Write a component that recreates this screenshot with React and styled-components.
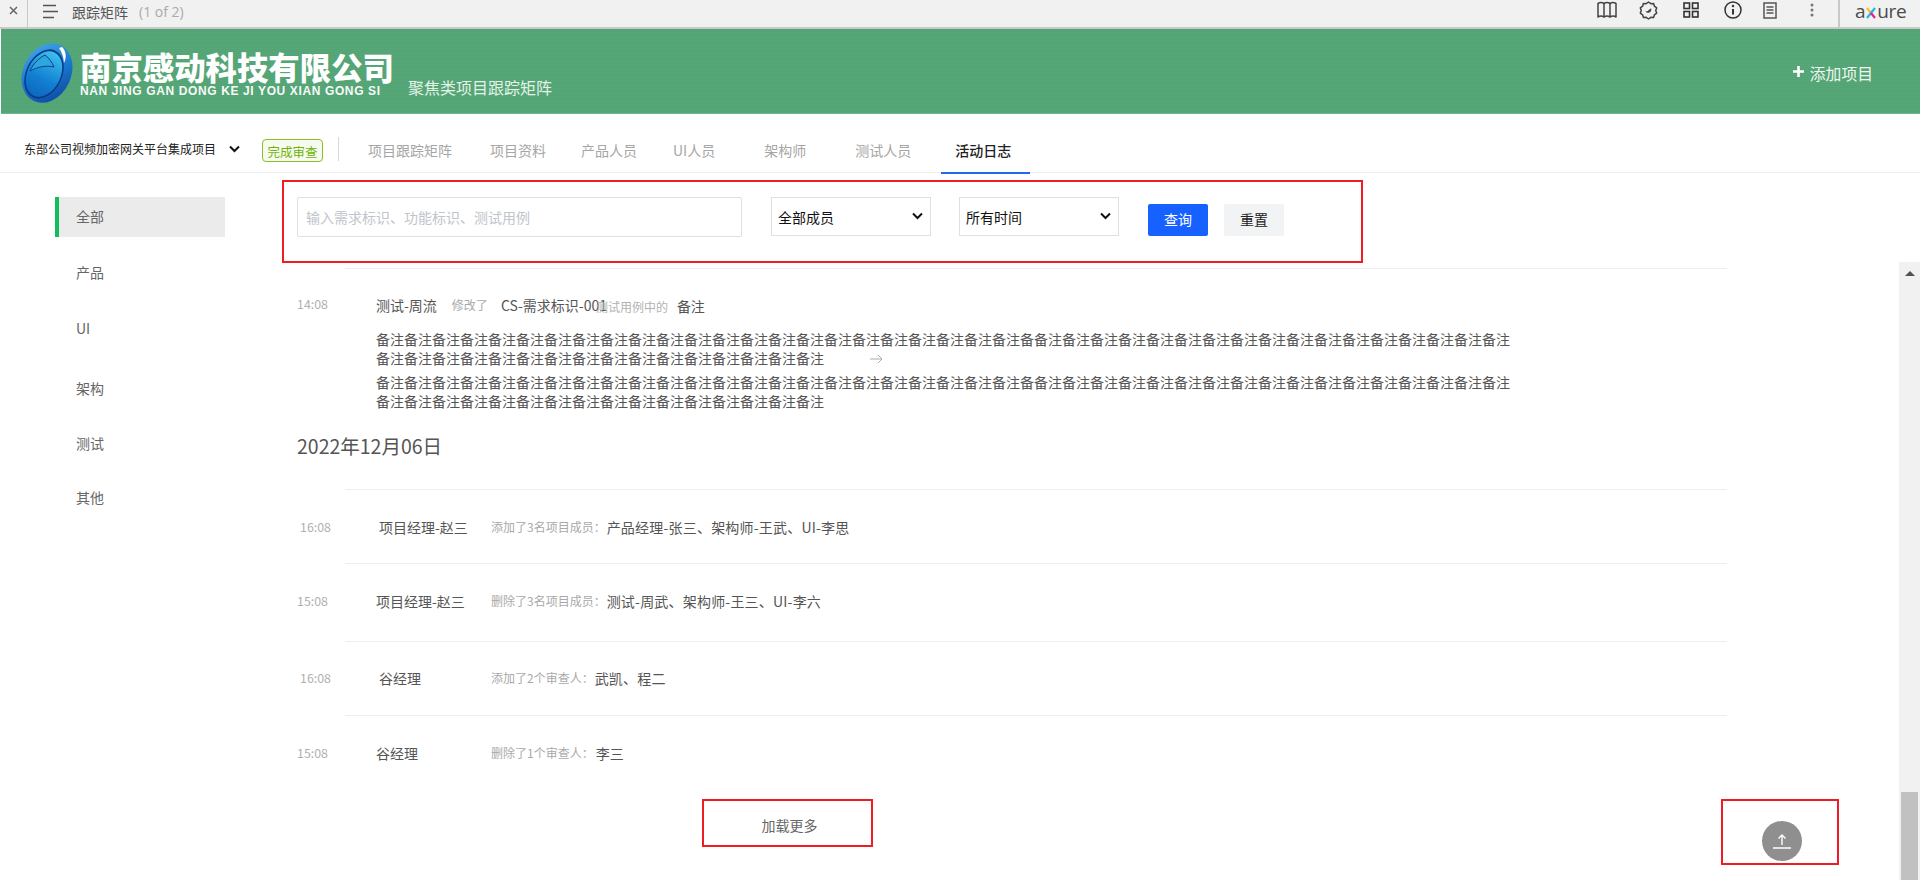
import React from "react";
import styled, { createGlobalStyle } from "styled-components";

const Global = createGlobalStyle`
  html, body { margin: 0; padding: 0; height: 880px; overflow: hidden; background: #fff; }
  body { font-family: "Noto Sans CJK SC", "Liberation Sans", sans-serif; }
  * { box-sizing: border-box; }
`;

const Page = styled.div`
  width: 1920px; height: 880px; display: flex; flex-direction: column; overflow: hidden;
`;

/* top Axure player bar */
const Toolbar = styled.header`
  height: 29px; flex: none; display: flex; align-items: center; background: #f1f1f1;
  border-bottom: 2px solid #c9c9c9; color: #555;
`;
const CloseCell = styled.div`
  width: 28px; height: 27px; display: flex; align-items: center; justify-content: center;
  border-right: 1px solid #c9c9c9; padding-bottom: 6px;
`;
const MenuIcon = styled.svg`
  width: 16px; height: 15px; margin: -5px 14px 0 14px; display: block;
`;
const PageTitle = styled.span`
  font-size: 14px; color: #555; line-height: 20px; margin-top: -4px;
`;
const PageCount = styled.span`
  font-size: 14px; color: #aaa; margin: -4px 0 0 11px; line-height: 20px; font-family: "Open Sans", sans-serif;
`;
const ToolIcons = styled.div`
  margin-left: auto; display: flex; align-items: center; height: 27px; padding-right: 15px;
`;
const ToolIcon = styled.svg`
  display: block; margin-left: ${(p) => p.$ml}px; margin-top: -7px; flex: none;
`;
const ToolDivider = styled.span`
  width: 2px; height: 27px; background: #c9c9c9; margin-left: 24px; flex: none;
`;
const AxureLogo = styled.div`
  margin: -5px 0 0 15px; width: 50px; flex: none; display: flex; align-items: center; white-space: nowrap;
  font-family: "Open Sans", sans-serif; font-size: 19px; line-height: 18px; color: #4b4b4b; letter-spacing: -0.3px;
`;
const AxureX = styled.svg`
  width: 10px; height: 12px; margin: 3px 1px 0 1px; display: block; flex: none;
`;

/* green banner */
const Banner = styled.div`
  height: 85px; flex: none; margin-left: 1px; display: flex; align-items: flex-start; color: #fff;
  background: repeating-linear-gradient(0deg, #57a778 0, #57a778 1px, #53a475 1px, #53a475 2px);
  border-bottom: 1px solid #6cb48b;
`;
const LogoMark = styled.svg`
  width: 52px; height: 60px; margin: 14px 0 0 20px; flex: none; display: block;
`;
const Brand = styled.div`
  margin: 21px 0 0 7px; width: 328px; flex: none;
`;
const BrandName = styled.div`
  font-size: 31.4px; font-weight: 900; line-height: 33px; height: 33px; white-space: nowrap;
`;
const BrandEn = styled.div`
  font-family: "Liberation Sans", sans-serif; font-weight: 700; font-size: 12px; line-height: 14px; margin-top: 1px;
  letter-spacing: 0.62px; white-space: nowrap; opacity: .95;
`;
const BannerSub = styled.div`
  font-size: 16px; line-height: 20px; margin-top: 48px; color: #e4f3e8;
`;
const AddProject = styled.div`
  margin: 34px 47px 0 auto; display: flex; align-items: center; font-size: 15.8px; line-height: 22px; color: #eef8ef;
`;
const PlusIcon = styled.svg`
  width: 11px; height: 11px; margin: -5px 6px 0 0; display: block;
`;

/* tab bar */
const TabBar = styled.nav`
  height: 59px; flex: none; display: flex; border-bottom: 1px solid #eceef2; align-items: flex-start;
`;
const ProjectName = styled.div`
  font-size: 12px; color: #222; margin: 26px 0 0 24px; width: 191px; line-height: 18px; white-space: nowrap;
`;
const Chevron = styled.svg`
  width: 11px; height: 8px; margin: 31px 0 0 14px; display: block; flex: none;
`;
const Badge = styled.div`
  width: 61px; height: 23px; margin: 25px 0 0 22px; flex: none; border: 1px solid #86bf2b; border-radius: 4px;
  background: #f6fbed; color: #6fb310; font-size: 12.5px; line-height: 24px; text-align: center; white-space: nowrap;
`;
const TabDivider = styled.span`
  width: 1px; height: 24px; background: #d9d9d9; margin: 23px 0 0 15px; flex: none;
`;
const Tab = styled.div`
  position: relative; margin-left: ${(p) => p.$ml}px; margin-top: 26px; font-size: 14px; line-height: 20px;
  white-space: nowrap; color: ${(p) => (p.$active ? "#222" : "#a6a6a6")}; font-weight: ${(p) => (p.$active ? 500 : 400)};
  ${(p) => p.$active && `
    &::after { content: ""; position: absolute; left: -14px; right: -19px; top: 32px; height: 2px; background: #2468f2; }
  `}
`;

/* body */
const Body = styled.div`
  flex: 1; display: flex; min-height: 0;
`;
const Sidebar = styled.aside`
  width: 282px; flex: none; padding: 24px 0 0 55px;
`;
const SideItem = styled.div`
  width: 170px; height: 40px; margin-top: ${(p) => p.$mt}px; display: flex; align-items: center; padding: 0 0 3px ${(p) => (p.$active ? 17 : 21)}px;
  font-size: 14px; color: #666; background: ${(p) => (p.$active ? "#ebebeb" : "transparent")};
  border-left: ${(p) => (p.$active ? "4px solid #0fbf5a" : "none")};
`;
const Content = styled.main`
  flex: 1; min-width: 0; padding-top: 7px;
`;
const FilterBox = styled.form`
  width: 1081px; height: 83px; border: 2px solid #ee1c25; display: flex; align-items: flex-start; padding: 15px 0 0 13px;
`;
const SearchInput = styled.input`
  width: 445px; height: 40px; border: 1px solid #dcdfe6; border-radius: 2px; padding: 0 8px; outline: none;
  font: 14px "Noto Sans CJK SC", sans-serif; color: #333;
  &::placeholder { color: #c0c4cc; opacity: 1; }
`;
const SelectWrap = styled.div`
  position: relative; width: 160px; height: 39px; margin-left: ${(p) => p.$ml}px; flex: none;
`;
const Select = styled.select`
  width: 100%; height: 100%; border: 1px solid #dcdfe6; background: #fff; padding: 0 6px; appearance: none;
  font: 14px "Noto Sans CJK SC", sans-serif; color: #111; outline: none; border-radius: 0;
`;
const SelectArrow = styled.svg`
  position: absolute; right: 8px; top: 15px; width: 11px; height: 8px; pointer-events: none;
`;
const Button = styled.button`
  width: 60px; height: 32px; margin: 7px 0 0 ${(p) => p.$ml}px; border: none; border-radius: 2px; padding: 0 0 2px;
  font: 14px "Noto Sans CJK SC", sans-serif;
  background: ${(p) => (p.$primary ? "#1661ff" : "#f2f3f5")}; color: ${(p) => (p.$primary ? "#fff" : "#222")};
`;
const Feed = styled.div`
  padding-left: 15px;
`;
const Rule = styled.div`
  height: 1px; width: 1382px; background: #eeeeee; margin: ${(p) => p.$mt || 0}px 0 0 48px;
`;
const Entry = styled.div`
  display: flex; padding-top: 26px;
`;
const Time = styled.div`
  flex: none; width: 79px; margin-top: ${(p) => p.$mt || 0}px; padding-left: ${(p) => p.$indent || 0}px; font-size: 12.4px; line-height: 16px; color: #b0b0b0;
`;
const EntryBody = styled.div`
  flex: 1;
`;
const EntryHead = styled.div`
  display: flex; align-items: center; height: 20px; white-space: nowrap; position: relative;
`;
const Actor = styled.span`
  font-size: 14px; color: #555; line-height: 20px;
`;
const Muted = styled.span`
  font-size: 12px; color: #a9a9a9; line-height: 20px;
`;
const Strong = styled.span`
  font-size: 14px; color: #555; line-height: 20px;
`;
const Head1 = styled(Muted)`
  margin: -1px 0 0 15px;
`;
const Head2 = styled(Strong)`
  margin-left: 13px; width: 95px;
`;
const Head3 = styled(Muted)`
  width: 72px; color: #b2b2b2; margin-top: 3px;
`;
const Head4 = styled(Strong)`
  margin: 1px 0 0 9px;
`;
const Para = styled.p`
  margin: ${(p) => p.$mt}px 0 0; width: 1135px; font-size: 14px; line-height: 19px; color: #555;
`;
const ArrowIcon = styled.svg`
  width: 13px; height: 10px; margin-left: 46px; display: inline-block;
`;
const DateHead = styled.h2`
  margin: 22px 0 0; font-weight: 400; font-size: 19.5px; line-height: 26px; color: #555;
`;
const LogRow = styled.div`
  height: ${(p) => p.$h}px; padding-bottom: ${(p) => p.$pb}px; display: flex; align-items: center;
`;
const RowActor = styled.div`
  flex: none; width: 115px; padding-left: ${(p) => p.$indent || 0}px; font-size: 14px; color: #555; white-space: nowrap;
`;
const RowValue = styled.span`
  font-size: 14px; color: #555; margin-left: ${(p) => p.$gap}px; white-space: nowrap; letter-spacing: 0.2px;
`;
const BottomRow = styled.div`
  display: flex; align-items: flex-start; margin-top: 10px;
`;
const LoadMore = styled.div`
  flex: none; width: 171px; height: 48px; margin-left: 405px; border: 2px solid #ee1c25; display: flex; align-items: center; justify-content: center;
  font-size: 14px; color: #666; padding: 4px 0 0 4px;
`;
const TopBox = styled.div`
  flex: none; width: 118px; height: 66px; margin-left: 848px; border: 2px solid #ee1c25; padding: 20px 0 0 39px;
`;
const TopButton = styled.div`
  width: 40px; height: 40px; border-radius: 50%; background: #8f8f8f; display: flex; align-items: center; justify-content: center;
`;
const TopIcon = styled.svg`
  width: 20px; height: 20px; display: block;
`;
const ScrollTrack = styled.div`
  width: 21px; flex: none; margin-top: 89px; background: #f1f1f1; display: flex; flex-direction: column; align-items: center;
`;
const ScrollArrow = styled.span`
  margin-top: 9px; width: 0; height: 0; border-left: 5px solid transparent; border-right: 5px solid transparent; border-bottom: 5px solid #505050;
`;
const ScrollThumb = styled.div`
  margin-top: auto; width: 17px; height: 88px; background: #c1c1c1;
`;

const BZ = "备注";
const line1 = BZ.repeat(23) + "备" + BZ.repeat(17) + BZ.repeat(16);

const rows = [
  { h: 73, pb: 0, t: "16:08", indent: 3, who: "项目经理-赵三", act: "添加了3名项目成员：", val: "产品经理-张三、架构师-王武、UI-李思", gap: 1 },
  { h: 77, pb: 3, t: "15:08", indent: 0, who: "项目经理-赵三", act: "删除了3名项目成员：", val: "测试-周武、架构师-王三、UI-李六", gap: 1 },
  { h: 73, pb: 2, t: "16:08", indent: 3, who: "谷经理", act: "添加了2个审查人：", val: "武凯、程二", gap: 1 },
  { h: 73, pb: 0, t: "15:08", indent: 0, who: "谷经理", act: "删除了1个审查人：", val: "李三", gap: 2 },
];

const tabs = [
  ["项目跟踪矩阵", 29], ["项目资料", 38], ["产品人员", 35], ["UI人员", 36], ["架构师", 49], ["测试人员", 49],
];

const chevronPath = "M1 1.500l4.500 4.500L10 1.500";

export default function App() {
  return (
    <Page>
      <Global />
      <Toolbar>
        <CloseCell>
          <svg width="9" height="9" viewBox="0 0 9 9"><path d="M1 1l7 7M8 1l-7 7" stroke="#666" strokeWidth="1.5" /></svg>
        </CloseCell>
        <MenuIcon viewBox="0 0 16 15"><path d="M1 1.5h13M1 7.500h16M1 13.500h11" stroke="#555" strokeWidth="1.6" /></MenuIcon>
        <PageTitle>跟踪矩阵</PageTitle>
        <PageCount>(1 of 2)</PageCount>
        <ToolIcons>
          <ToolIcon $ml={0} width="20" height="18" viewBox="0 0 20 18" fill="none" stroke="#444" strokeWidth="1.5" strokeLinejoin="round">
            <path d="M1 2.500c2-1.300 4-1.300 6 0 2-1.300 4-1.300 6 0 2-1.300 4-1.300 6 0V16c-2-1.300-4-1.300-6 0-2-1.300-4-1.300-6 0-2-1.300-4-1.300-6 0z" />
            <path d="M7 2.500V16M13 2.500V16" />
          </ToolIcon>
          <ToolIcon $ml={22} width="19" height="19" viewBox="0 0 19 19" fill="none" stroke="#444" strokeWidth="1.500" strokeLinejoin="round">
            <path d="M9.500 1l2.300 1.700 2.800-.2.800 2.700 2.300 1.700-1 2.600 1 2.600-2.300 1.700-.8 2.700-2.800-.2L9.500 18l-2.300-1.700-2.800.2-.8-2.700L1.300 12.100l1-2.600-1-2.600 2.300-1.700.8-2.700 2.800.2z" />
            <path d="M6.500 10.500c1.500 2 4.500 1.500 5.500-.5.500-1 .5-2 0-3-.5 1.500-2.500 1.500-3 3z" fill="#444" stroke="none" />
          </ToolIcon>
          <ToolIcon $ml={25} width="16" height="16" viewBox="0 0 16 16" fill="none" stroke="#333" strokeWidth="1.600">
            <rect x="1" y="1" width="5.500" height="5.500" /><rect x="9.500" y="1" width="5.500" height="5.500" />
            <rect x="1" y="9.500" width="5.500" height="5.500" /><rect x="9.500" y="9.500" width="5.500" height="5.500" />
          </ToolIcon>
          <ToolIcon $ml={25} width="18" height="18" viewBox="0 0 18 18" fill="none" stroke="#333" strokeWidth="1.500">
            <circle cx="9" cy="9" r="8" />
            <path d="M9 8v5.500" strokeWidth="2" /><circle cx="9" cy="5" r="1.200" fill="#333" stroke="none" />
          </ToolIcon>
          <ToolIcon $ml={21} width="14" height="17" viewBox="0 0 14 17" fill="none" stroke="#555" strokeWidth="1.500">
            <rect x="1" y="1" width="12" height="15" /><path d="M3.500 5h7M3.500 8h7M3.500 11h7" strokeWidth="1.300" />
          </ToolIcon>
          <ToolIcon $ml={33} width="4" height="14" viewBox="0 0 4 14" fill="#777">
            <circle cx="2" cy="2" r="1.500" /><circle cx="2" cy="7" r="1.500" /><circle cx="2" cy="12" r="1.500" />
          </ToolIcon>
          <ToolDivider />
          <AxureLogo>
            a
            <AxureX viewBox="0 0 10 12" fill="none" strokeWidth="2.200">
              <path d="M1 1l4 5" stroke="#f5c02c" /><path d="M9 1L5 6" stroke="#1eb3e6" />
              <path d="M5 6L1 11" stroke="#29b6e8" /><path d="M5 6L9 11" stroke="#e6218e" />
            </AxureX>
            ure
          </AxureLogo>
        </ToolIcons>
      </Toolbar>

      <Banner>
        <LogoMark viewBox="0 0 52 60">
          <defs>
            <linearGradient id="lg1" x1="0" y1="0" x2="1" y2="1">
              <stop offset="0" stopColor="#4ab0ea" /><stop offset=".5" stopColor="#1a78cf" /><stop offset="1" stopColor="#0a3f98" />
            </linearGradient>
            <linearGradient id="lg2" x1="0" y1="0" x2="0" y2="1">
              <stop offset="0" stopColor="#3cc0ee" /><stop offset=".6" stopColor="#1280d2" /><stop offset="1" stopColor="#0d68c0" />
            </linearGradient>
          </defs>
          <ellipse cx="26" cy="30" rx="24" ry="31" transform="rotate(26 26 30)" fill="url(#lg1)" />
          <ellipse cx="23" cy="31" rx="18" ry="26" transform="rotate(26 23 31)" fill="#0a3c88" />
          <ellipse cx="23" cy="31" rx="16.500" ry="24" transform="rotate(26 23 31)" fill="url(#lg2)" />
          <path d="M9 28c3-7 9-13 15-16 4 3 7 7 9 12-8-2-17 0-24 4z" fill="#2da6de" stroke="#0a3f8a" strokeWidth="1" />
          <path d="M41 4c4 4 5 10 2 16-.5-6-2-11-5-15z" fill="#fff" />
        </LogoMark>
        <Brand>
          <BrandName>南京感动科技有限公司</BrandName>
          <BrandEn>NAN JING GAN DONG KE JI YOU XIAN GONG SI</BrandEn>
        </Brand>
        <BannerSub>聚焦类项目跟踪矩阵</BannerSub>
        <AddProject>
          <PlusIcon viewBox="0 0 11 11"><path d="M5.500 0v11M0 5.500h11" stroke="#fff" strokeWidth="2.600" /></PlusIcon>
          添加项目
        </AddProject>
      </Banner>

      <TabBar>
        <ProjectName>东部公司视频加密网关平台集成项目</ProjectName>
        <Chevron viewBox="0 0 11 8"><path d={chevronPath} fill="none" stroke="#111" strokeWidth="2" /></Chevron>
        <Badge>完成审查</Badge>
        <TabDivider />
        {tabs.map(([t, ml]) => <Tab key={t} $ml={ml}>{t}</Tab>)}
        <Tab $ml={44} $active>活动日志</Tab>
      </TabBar>

      <Body>
        <Sidebar>
          <SideItem $active $mt={0}>全部</SideItem>
          <SideItem $mt={16}>产品</SideItem>
          <SideItem $mt={16}>UI</SideItem>
          <SideItem $mt={20}>架构</SideItem>
          <SideItem $mt={15}>测试</SideItem>
          <SideItem $mt={14}>其他</SideItem>
        </Sidebar>
        <Content>
          <FilterBox>
            <SearchInput placeholder="输入需求标识、功能标识、测试用例" />
            <SelectWrap $ml={29}>
              <Select defaultValue="全部成员"><option>全部成员</option></Select>
              <SelectArrow viewBox="0 0 11 8"><path d={chevronPath} fill="none" stroke="#111" strokeWidth="2" /></SelectArrow>
            </SelectWrap>
            <SelectWrap $ml={28}>
              <Select defaultValue="所有时间"><option>所有时间</option></Select>
              <SelectArrow viewBox="0 0 11 8"><path d={chevronPath} fill="none" stroke="#111" strokeWidth="2" /></SelectArrow>
            </SelectWrap>
            <Button type="button" $primary $ml={29}>查询</Button>
            <Button type="button" $ml={16}>重置</Button>
          </FilterBox>
          <Feed>
            <Rule $mt={5} />
            <Entry>
              <Time $mt={1}>14:08</Time>
              <EntryBody>
                <EntryHead>
                  <Actor>测试-周流</Actor>
                  <Head1>修改了</Head1>
                  <Head2>CS-需求标识-001</Head2>
                  <Head3>测试用例中的</Head3>
                  <Head4>备注</Head4>
                </EntryHead>
                <Para $mt={15}>
                  {line1}
                  <ArrowIcon viewBox="0 0 13 10"><path d="M0 5h12M8 1l4 4-4 4" fill="none" stroke="#a9adbb" strokeWidth="1" /></ArrowIcon>
                </Para>
                <Para $mt={5}>{line1}</Para>
              </EntryBody>
            </Entry>
            <DateHead>2022年12月06日</DateHead>
            <Rule $mt={30} />
            {rows.map((r, i) => (
              <React.Fragment key={i}>
                {i > 0 && <Rule />}
                <LogRow $h={r.h} $pb={r.pb}>
                  <Time $indent={r.indent}>{r.t}</Time>
                  <RowActor $indent={r.indent}>{r.who}</RowActor>
                  <Muted>{r.act}</Muted>
                  <RowValue $gap={r.gap}>{r.val}</RowValue>
                </LogRow>
              </React.Fragment>
            ))}
            <BottomRow>
              <LoadMore>加载更多</LoadMore>
              <TopBox>
                <TopButton>
                  <TopIcon viewBox="0 0 20 20">
                    <path d="M10 14V4M6.500 7.500L10 4l3.500 3.500M1 17h18" fill="none" stroke="#fff" strokeWidth="1.400" />
                  </TopIcon>
                </TopButton>
              </TopBox>
            </BottomRow>
          </Feed>
        </Content>
        <ScrollTrack>
          <ScrollArrow />
          <ScrollThumb />
        </ScrollTrack>
      </Body>
    </Page>
  );
}
